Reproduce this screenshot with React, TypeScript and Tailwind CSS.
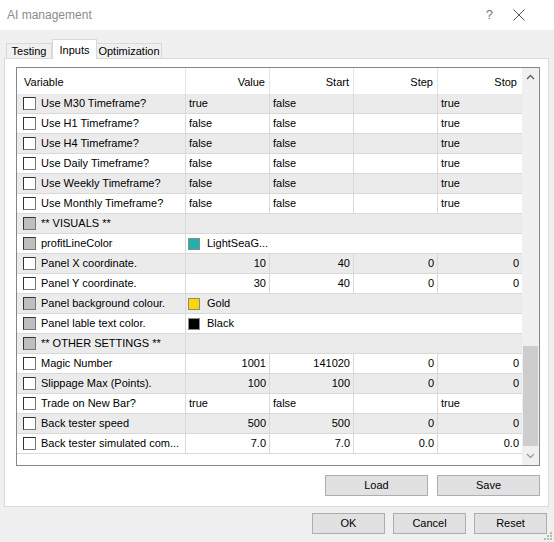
import React from "react";

type Row = {
  name: string;
  kind: "bool" | "num" | "color" | "header";
  disabled?: boolean;
  value?: string;
  start?: string;
  step?: string;
  stop?: string;
  color?: string;
};

const rows: Row[] = [
  { name: "Use M30 Timeframe?", kind: "bool", value: "true", start: "false", stop: "true" },
  { name: "Use H1 Timeframe?", kind: "bool", value: "false", start: "false", stop: "true" },
  { name: "Use H4 Timeframe?", kind: "bool", value: "false", start: "false", stop: "true" },
  { name: "Use Daily Timeframe?", kind: "bool", value: "false", start: "false", stop: "true" },
  { name: "Use Weekly Timeframe?", kind: "bool", value: "false", start: "false", stop: "true" },
  { name: "Use Monthly Timeframe?", kind: "bool", value: "false", start: "false", stop: "true" },
  { name: "** VISUALS **", kind: "header", disabled: true },
  { name: "profitLineColor", kind: "color", disabled: true, value: "LightSeaG...", color: "#20b2aa" },
  { name: "Panel X coordinate.", kind: "num", value: "10", start: "40", step: "0", stop: "0" },
  { name: "Panel Y coordinate.", kind: "num", value: "30", start: "40", step: "0", stop: "0" },
  { name: "Panel background colour.", kind: "color", disabled: true, value: "Gold", color: "#ffd700" },
  { name: "Panel lable text color.", kind: "color", disabled: true, value: "Black", color: "#000000" },
  { name: "** OTHER SETTINGS **", kind: "header", disabled: true },
  { name: "Magic Number", kind: "num", value: "1001", start: "141020", step: "0", stop: "0" },
  { name: "Slippage Max (Points).", kind: "num", value: "100", start: "100", step: "0", stop: "0" },
  { name: "Trade on New Bar?", kind: "bool", value: "true", start: "false", stop: "true" },
  { name: "Back tester speed", kind: "num", value: "500", start: "500", step: "0", stop: "0" },
  { name: "Back tester simulated com...", kind: "num", value: "7.0", start: "7.0", step: "0.0", stop: "0.0" },
];

function Check({ disabled }: { disabled?: boolean }) {
  return (
    <div
      className={
        "w-[13px] h-[13px] shrink-0 border border-t-[#333] border-l-[#333] border-r-[#777] border-b-[#777] " +
        (disabled ? "bg-[#bfbfbf]" : "bg-white")
      }
    />
  );
}

function Cell({ children, right, last }: { children?: React.ReactNode; right?: boolean; last?: boolean }) {
  return (
    <div
      className={
        "w-[84px] h-full flex items-center px-[3px] " +
        (right ? "justify-end " : "justify-start ") +
        (last ? "" : "border-r border-[#d9d9d9]")
      }
    >
      {children}
    </div>
  );
}

function DataRow({ row, idx }: { row: Row; idx: number }) {
  const bg = idx % 2 === 0 ? "bg-[#ebebeb]" : "bg-white";
  return (
    <div className={"flex h-[20px] border-b border-[#d9d9d9] " + bg}>
      <div className="w-[169px] h-full flex items-center pl-[6px] gap-[5px] border-r border-[#d9d9d9]">
        <Check disabled={row.disabled} />
        <span className="whitespace-nowrap">{row.name}</span>
      </div>
      {row.kind === "header" && <div className="flex-1" />}
      {row.kind === "color" && (
        <div className="flex-1 flex items-center pl-[2px] gap-[7px]">
          <div className="w-[12px] h-[12px] border border-[#8a8a8a]" style={{ backgroundColor: row.color }} />
          <span>{row.value}</span>
        </div>
      )}
      {(row.kind === "bool" || row.kind === "num") && (
        <>
          <Cell right={row.kind === "num"}>{row.value}</Cell>
          <Cell right={row.kind === "num"}>{row.start}</Cell>
          <Cell right={row.kind === "num"}>{row.step}</Cell>
          <Cell right={row.kind === "num"} last>
            {row.stop}
          </Cell>
        </>
      )}
    </div>
  );
}

function Btn({ label, w }: { label: string; w: string }) {
  return (
    <div className={"h-[21px] flex items-center justify-center bg-[#e1e1e1] border border-[#adadad] text-black " + w}>
      {label}
    </div>
  );
}

export default function App() {
  return (
    <div
      className="w-[554px] h-[542px] bg-[#f0f0f0] flex flex-col text-[11px] text-black relative overflow-hidden"
      style={{ fontFamily: '"Liberation Sans", Arial, sans-serif' }}
    >
      {/* Title bar */}
      <div className="h-[30px] bg-white flex items-center shrink-0">
        <span className="ml-[7px] text-[#8c8c8c] text-[12px]">AI management</span>
        <span className="ml-auto text-[#777] text-[13px] mr-[20px]">?</span>
        <svg width="12" height="12" viewBox="0 0 12 12" className="mr-[29px]">
          <path d="M0.5 0.5 L11.5 11.5 M11.5 0.5 L0.5 11.5" stroke="#555" strokeWidth="1" />
        </svg>
      </div>

      {/* Tabs */}
      <div className="flex items-end h-[28px] pl-[6px] shrink-0">
        <div className="h-[15px] w-[46px] border border-b-0 border-[#d9d9d9] bg-[#f0f0f0] flex items-center justify-center pt-[1px]">
          Testing
        </div>
        <div className="h-[20px] w-[45px] border border-b-0 border-[#d9d9d9] bg-white flex items-start pt-[2px] justify-center relative z-10 -mb-[1px]">
          Inputs
        </div>
        <div className="h-[15px] w-[65px] border border-b-0 border-l-0 border-[#d9d9d9] bg-[#f0f0f0] flex items-center justify-center pt-[1px]">
          Optimization
        </div>
      </div>

      {/* Panel */}
      <div className="ml-[4px] w-[545px] h-[449px] bg-white border border-[#d9d9d9] flex flex-col pt-[8px] pl-[11px]">
        <div className="w-[524px] h-[399px] border border-[#828790] flex">
          <div className="w-[505px] flex flex-col">
            {/* header */}
            <div className="flex h-[26px] bg-white">
              <div className="w-[169px] h-full flex items-center pl-[7px] pt-[2px] border-r border-[#e5e5e5]">Variable</div>
              <div className="w-[84px] h-full flex items-center justify-end pr-[4px] pt-[2px] border-r border-[#e5e5e5]">Value</div>
              <div className="w-[84px] h-full flex items-center justify-end pr-[4px] pt-[2px] border-r border-[#e5e5e5]">Start</div>
              <div className="w-[84px] h-full flex items-center justify-end pr-[4px] pt-[2px] border-r border-[#e5e5e5]">Step</div>
              <div className="w-[84px] h-full flex items-center justify-end pr-[5px] pt-[2px]">Stop</div>
            </div>
            {rows.map((r, i) => (
              <DataRow key={i} row={r} idx={i} />
            ))}
          </div>
          {/* scrollbar */}
          <div className="w-[17px] bg-[#f0f0f0] flex flex-col">
            <div className="h-[17px] flex items-center justify-center">
              <svg width="9" height="6" viewBox="0 0 9 6">
                <path d="M1 5 L4.5 1.5 L8 5" stroke="#606060" strokeWidth="1.4" fill="none" />
              </svg>
            </div>
            <div className="h-[261px]" />
            <div className="h-[100px] mx-[1px] bg-[#cdcdcd]" />
            <div className="flex-1 flex items-center justify-center">
              <svg width="9" height="6" viewBox="0 0 9 6">
                <path d="M1 1 L4.5 4.5 L8 1" stroke="#a0a0a0" strokeWidth="1.4" fill="none" />
              </svg>
            </div>
          </div>
        </div>
        <div className="flex justify-end gap-[9px] w-[524px] mt-[9px]">
          <Btn label="Load" w="w-[103px]" />
          <Btn label="Save" w="w-[103px]" />
        </div>
      </div>

      {/* Bottom buttons */}
      <div className="flex justify-end gap-[8px] mt-[6px] pr-[7px]">
        <Btn label="OK" w="w-[73px]" />
        <Btn label="Cancel" w="w-[73px]" />
        <Btn label="Reset" w="w-[73px]" />
      </div>

      {/* resize grip */}
      <svg width="10" height="10" viewBox="0 0 10 10" className="absolute right-[1px] bottom-[1px]">
        <rect x="7" y="1" width="2" height="2" fill="#b8b8b8" />
        <rect x="4" y="4" width="2" height="2" fill="#b8b8b8" />
        <rect x="7" y="4" width="2" height="2" fill="#b8b8b8" />
        <rect x="1" y="7" width="2" height="2" fill="#b8b8b8" />
        <rect x="4" y="7" width="2" height="2" fill="#b8b8b8" />
        <rect x="7" y="7" width="2" height="2" fill="#b8b8b8" />
      </svg>
    </div>
  );
}
